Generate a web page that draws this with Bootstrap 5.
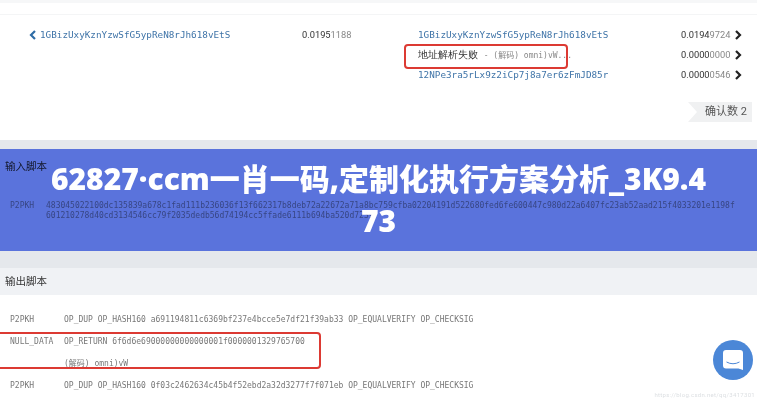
<!DOCTYPE html>
<html lang="zh">
<head>
    <meta charset="UTF-8">
    <title>62827·ccm一肖一码</title>
    <link href="https://cdn.jsdelivr.net/npm/bootstrap@5.3.2/dist/css/bootstrap.min.css" rel="stylesheet">
    <style>
        html, body { height: 400px; overflow: hidden; }
        body { background-color: #e5e8ec; font-family: "Roboto", "Noto Sans CJK SC", sans-serif; color: #444; position: relative; }
        .top-strip { height: 15px; background: linear-gradient(#f6f7f8 0 3px, #fff 3px); border-bottom: 1px solid #f4f5f6; }
        .tx-panel { height: 125px; background: #fff; font-size: 9.3px; }
        .tx-left { width: 388px; padding: 10px 0 0 28px; }
        .tx-right { width: 369px; padding: 10px 0 0 30px; }
        .tx-row { height: 20px; line-height: 12px; }
        .addr { font-family: "DejaVu Sans Mono", monospace; color: #3f74a8; width: 263px; white-space: nowrap; }
        .addr-left { width: 262px; }
        .chev { width: 10px; height: 10px; flex: none; }
        .chev-left { margin-right: 2px; }
        .amount { color: #333; width: 52px; }
        .amount i { font-style: normal; color: #888; }
        .fail-text { color: #333; font-size: 9.5px; position: relative; }
        .fail-text em { font-style: normal; font-family: "DejaVu Sans Mono", "Noto Sans CJK SC", monospace; color: #888; font-size: 8px; }
        .red-box { border: 2px solid #dc3a33; border-radius: 4px; position: absolute; pointer-events: none; }
        .box-addr { left: -14px; top: -5px; width: 164px; height: 25px; }
        .box-script { left: -4px; top: 332px; width: 325px; height: 37px; }
        .confirm-tag { background: #f0f1f2; color: #555; font-size: 11px; width: 64px; height: 20px; line-height: 20px; margin: 17px 0 0 270px; padding-left: 17px; clip-path: polygon(0 0, 100% 0, 100% 100%, 0 100%, 9px 50%); white-space: nowrap; }
        .sec-head { background: #f0f2f5; font-size: 10.5px; color: #333; padding-left: 5px; }
        .sec-in { margin-top: 9px; height: 32px; line-height: 26px; padding-top: 5px; background: #fff; }
        .sec-out { margin-top: 17px; height: 27px; line-height: 27px; }
        .sec-body { background: #fff; font-family: "DejaVu Sans Mono", "Noto Sans CJK SC", monospace; font-size: 8px; color: #777; }
        .body-in { height: 70px; padding: 20px 0 0 10px; color: #9a9a9a; }
        .body-out { height: 105px; padding: 19px 0 0 10px; }
        .script-type { width: 54px; flex: none; }
        .hex-lines { line-height: 10px; white-space: nowrap; }
        .in-type { width: 36px; flex: none; line-height: 10px; }
        .script-line { height: 22px; line-height: 12px; white-space: nowrap; }
        .promo-band { position: absolute; left: 0; right: 0; top: 149px; height: 102px; display: flex; align-items: center; justify-content: center; padding: 0 50px; }
        .promo-band::before { content: ""; position: absolute; inset: 0; background: #5a73dc; mix-blend-mode: multiply; }
        .promo-title { position: relative; margin: 0; color: #fff; font-family: "Noto Sans", "Noto Sans CJK SC", sans-serif; font-weight: 900; font-size: 30px; line-height: 42px; text-align: center; word-break: break-all; }
        .chat-btn { position: absolute; left: 713px; top: 340px; width: 40px; height: 40px; border-radius: 50%; background: #4b87d7; }
        .water-mark { position: absolute; right: 2px; top: 390px; font-size: 6px; color: #dcdfe2; white-space: nowrap; letter-spacing: .3px; }
    </style>
</head>
<body>

<div class="top-strip"></div>

<!-- 交易 -->
<div class="tx-panel d-flex">
    <div class="tx-left d-flex align-items-start">
        <div class="tx-row d-flex align-items-center">
            <svg class="chev chev-left" viewBox="0 0 10 10"><path d="M7 1 L3 5 L7 9" fill="none" stroke="#2f6ca6" stroke-width="2.2"/></svg>
            <span class="addr addr-left">1GBizUxyKznYzwSfG5ypReN8rJh618vEtS</span>
            <span class="amount">0.0195<i>1188</i></span>
        </div>
    </div>
    <div class="tx-right">
        <div class="tx-row d-flex align-items-center">
            <span class="addr">1GBizUxyKznYzwSfG5ypReN8rJh618vEtS</span>
            <span class="amount">0.0194<i>9724</i></span>
            <svg class="chev" viewBox="0 0 10 10"><path d="M3 1 L7 5 L3 9" fill="none" stroke="#222" stroke-width="2.2"/></svg>
        </div>
        <div class="tx-row d-flex align-items-center">
            <span class="addr fail-text">地址解析失败 <em>- (解码) omni)vW...</em><span class="red-box box-addr"></span></span>
            <span class="amount">0.0000<i>0000</i></span>
            <svg class="chev" viewBox="0 0 10 10"><path d="M3 1 L7 5 L3 9" fill="none" stroke="#222" stroke-width="2.2"/></svg>
        </div>
        <div class="tx-row d-flex align-items-center">
            <span class="addr">12NPe3ra5rLx9z2iCp7j8a7er6zFmJD85r</span>
            <span class="amount">0.0000<i>0546</i></span>
            <svg class="chev" viewBox="0 0 10 10"><path d="M3 1 L7 5 L3 9" fill="none" stroke="#222" stroke-width="2.2"/></svg>
        </div>
        <div class="confirm-tag">确认数 2</div>
    </div>
</div>

<!-- 输入脚本 -->
<div class="sec-head sec-in">输入脚本</div>
<div class="sec-body body-in d-flex">
    <div class="in-type">P2PKH</div>
    <div class="hex-lines">
        <div>483045022100dc135839a678c1fad111b236036f13f662317b8deb72a22672a71a8bc759cfba02204191d522680fed6fe600447c980d22a6407fc23ab52aad215f4033201e1198f</div>
        <div>601210278d40cd3134546cc79f2035dedb56d74194cc5ffade6111b694ba520d7239</div>
    </div>
</div>

<!-- 输出脚本 -->
<div class="sec-head sec-out">输出脚本</div>
<div class="sec-body body-out">
    <div class="script-line d-flex"><span class="script-type">P2PKH</span><span>OP_DUP OP_HASH160 a691194811c6369bf237e4bcce5e7df21f39ab33 OP_EQUALVERIFY OP_CHECKSIG</span></div>
    <div class="script-line d-flex"><span class="script-type">NULL_DATA</span><span>OP_RETURN 6f6d6e69000000000000001f0000001329765700</span></div>
    <div class="script-line d-flex"><span class="script-type"></span><span>(解码) omni)vW</span></div>
    <div class="script-line d-flex"><span class="script-type">P2PKH</span><span>OP_DUP OP_HASH160 0f03c2462634c45b4f52ebd2a32d3277f7f071eb OP_EQUALVERIFY OP_CHECKSIG</span></div>
</div>

<div class="red-box box-script"></div>

<div class="promo-band">
    <h1 class="promo-title">62827·ccm一肖一码,定制化执行方案分析_3K9.473</h1>
</div>

<div class="chat-btn">
    <svg width="40" height="40" viewBox="0 0 40 40">
        <path d="M13 10 H27 Q30 10 30 13 V30 L25.5 28.5 H13 Q10 28.5 10 25.5 V13 Q10 10 13 10 Z" fill="#fff"/>
        <path d="M13.5 22 Q20 25.5 26.5 22" fill="none" stroke="#4b87d7" stroke-width="1"/>
    </svg>
</div>
<div class="water-mark">https://blog.csdn.net/qq/3417301</div>

<script src="https://cdn.jsdelivr.net/npm/bootstrap@5.3.2/dist/js/bootstrap.bundle.min.js"></script>
</body>
</html>
